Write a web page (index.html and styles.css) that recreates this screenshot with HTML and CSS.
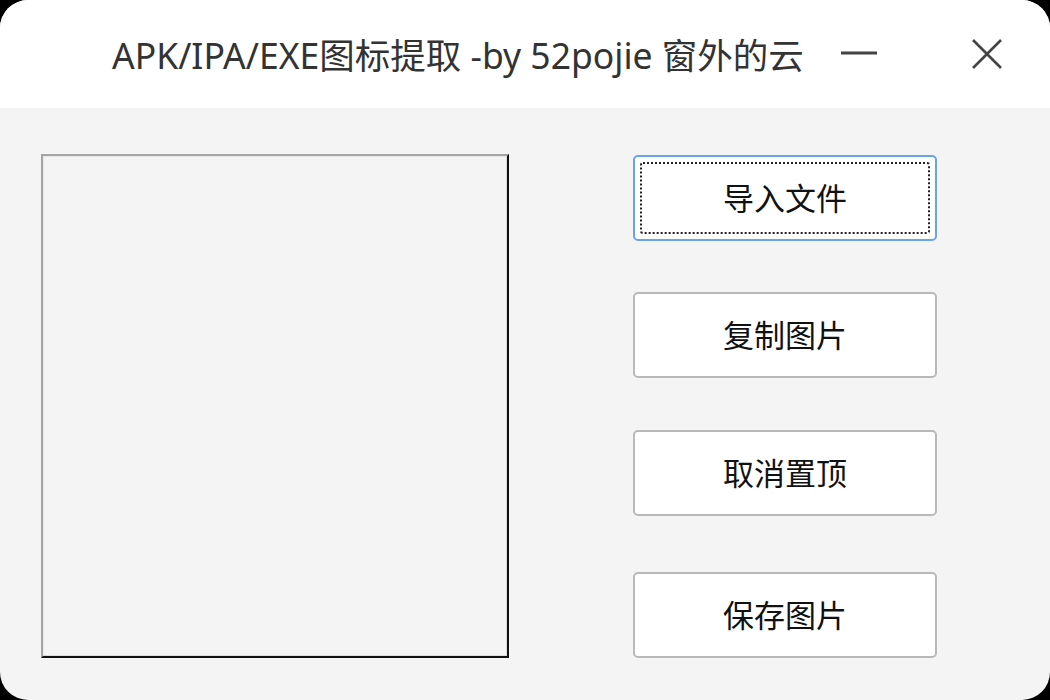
FILE: index.html
```html
<!DOCTYPE html>
<html lang="zh">
<head>
<meta charset="utf-8">
<link rel="stylesheet" href="styles.css">
</head>
<body>
<div class="window">
  <div class="titlebar">
    <div class="title">APK/IPA/EXE图标提取 -by 52pojie 窗外的云</div>
    <div class="controls">
      <span class="ctl min"><svg width="36" height="4" viewBox="0 0 36 4"><rect x="0" y="0.5" width="36" height="3" fill="#444"/></svg></span>
      <span class="ctl close"><svg width="32" height="32" viewBox="0 0 32 32"><path d="M2 2 L30 30 M30 2 L2 30" stroke="#444" stroke-width="2.6" fill="none"/></svg></span>
    </div>
  </div>
  <div class="content">
    <div class="preview"></div>
    <div class="buttons">
      <button class="btn focused"><span class="focus-ring">导入文件</span></button>
      <button class="btn b2">复制图片</button>
      <button class="btn b3">取消置顶</button>
      <button class="btn b4">保存图片</button>
    </div>
  </div>
</div>
</body>
</html>
```

FILE: styles.css
```css
html, body {
  margin: 0;
  padding: 0;
  background: #000;
}
.window {
  width: 1050px;
  height: 700px;
  border-radius: 28px;
  overflow: hidden;
  background: #f4f4f4;
  display: flex;
  flex-direction: column;
}
.titlebar {
  height: 108px;
  background: #fff;
  display: flex;
  align-items: center;
  padding-left: 112px;
  box-sizing: border-box;
}
.title {
  font-family: "Noto Sans", "Noto Sans CJK SC", sans-serif;
  font-size: 35.5px;
  color: #333;
  letter-spacing: 0;
  margin-top: -1px;
  white-space: nowrap;
}
.controls {
  display: flex;
  align-items: center;
  margin-left: auto;
}
.ctl {
  display: flex;
  align-items: center;
  justify-content: center;
}
.min {
  width: 36px;
  margin-right: 94px;
  margin-top: -2px;
}
.close {
  width: 32px;
  margin-right: 47px;
}
.content {
  display: flex;
  padding-top: 46px;
  padding-left: 41px;
}
.preview {
  width: 468px;
  height: 504px;
  box-sizing: border-box;
  border-top: 2px solid #a4a4a4;
  border-left: 2px solid #a4a4a4;
  border-right: 2px solid #111;
  border-bottom: 2px solid #111;
  box-shadow: inset -1px -1px 0 #dcdcdc, inset 1px 1px 0 #e8e8e8;
}
.buttons {
  display: flex;
  flex-direction: column;
  margin-left: 124px;
  margin-top: 1px;
}
.btn {
  width: 304px;
  height: 86px;
  box-sizing: border-box;
  background: #fff;
  border: 2px solid #b9b9b9;
  border-radius: 5px;
  font-family: "Noto Sans CJK SC", sans-serif;
  font-size: 31px;
  color: #111;
  padding: 0 0 4px 0;
  display: flex;
  align-items: center;
  justify-content: center;
}
.btn.focused {
  border-color: #68a4ee;
  padding: 5px;
}
.focus-ring {
  flex: 1;
  align-self: stretch;
  display: flex;
  align-items: center;
  justify-content: center;
  padding-bottom: 4px;
  border: 2px dotted #222;
  border-radius: 3px;
}
.b2 { margin-top: 51px; }
.b3 { margin-top: 52px; }
.b4 { margin-top: 56px; }
```
